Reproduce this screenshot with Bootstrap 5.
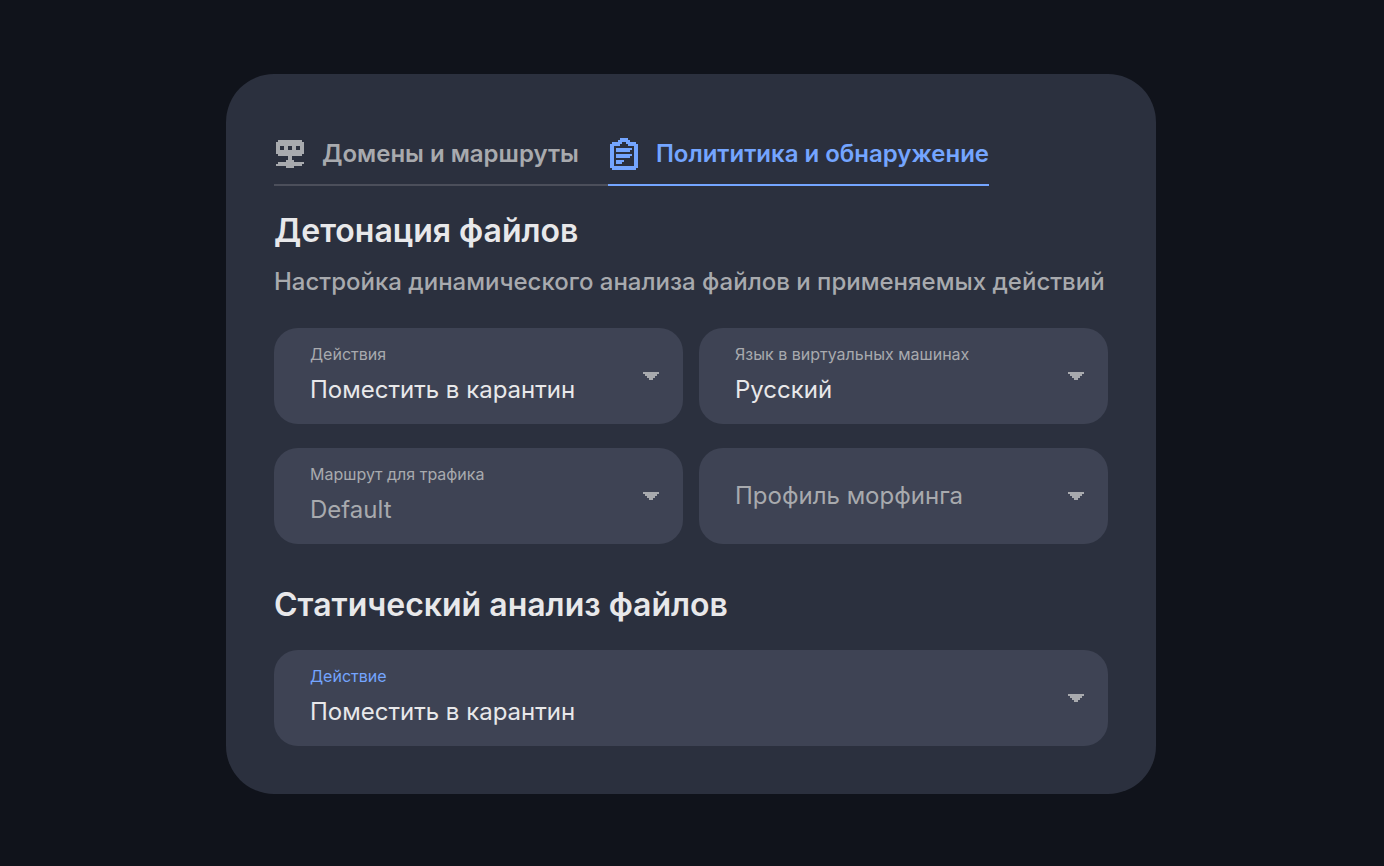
<!DOCTYPE html>
<html lang="ru">
<head>
<meta charset="utf-8">
<meta name="viewport" content="width=device-width, initial-scale=1">
<title>Детонация файлов</title>
<link href="https://cdn.jsdelivr.net/npm/bootstrap@5.3.0/dist/css/bootstrap.min.css" rel="stylesheet">
<style>
  body { background: #10131b; color: #e8e8ea; font-family: Inter, "Liberation Sans", sans-serif; }
  .stage { padding: 26px 14px 24px 12px; }
  .panel { background: #2b303e; border-radius: 48px; max-width: 930px; padding: 48px; }
  .tab-link { color: #a8aaae; font-size: 24px; font-weight: 600; line-height: 32px; padding: 16px 0 14px; border-bottom: 2px solid #4c4f5b; gap: 16px; }
  .tab-link:first-child { padding-right: 29px; }
  .tab-link:hover { color: #c4c6ca; }
  .tab-link.active { color: #74a5ff; border-color: #74a5ff; }
  .tab-icon { width: 32px; height: 32px; fill: currentColor; flex: none; }
  .section-title { font-size: 32px; font-weight: 600; line-height: 42px; margin: 0; }
  .hint { color: #a8aaae; font-size: 24px; font-weight: 500; line-height: 32px; margin: 14px 0 0; }
  .fields { row-gap: 24px; padding-top: 6px; }
  .field-label { position: absolute; top: 16px; left: 36px; font-size: 16px; line-height: 20px; color: #a8aaae; pointer-events: none; }
  .field-label.current { color: #74a5ff; }
  .field-select {
    height: 96px; padding: 42px 56px 14px 36px; border: 0; border-radius: 24px;
    font-size: 24px; line-height: 32px; color: #e8e8ea;
    background: #3e4354 url("data:image/svg+xml,%3Csvg xmlns='http://www.w3.org/2000/svg' viewBox='0 0 8 4' shape-rendering='crispEdges'%3E%3Cpath fill='%23a8aaae' d='M0 0h8v1H7v1H6v1H5v1H3V3H2V2H1V1H0z'/%3E%3C/svg%3E") no-repeat right 24px center / 16px 8px;
  }
  .field-select.muted { color: #a8aaae; }
  .field-select.unlabelled { padding-top: 26px; padding-bottom: 26px; }
</style>
</head>
<body>
<div class="stage container-fluid min-vh-100 d-flex align-items-center justify-content-center">
  <main class="panel w-100">
    <nav class="d-flex" aria-label="Разделы настроек">
      <a class="tab-link d-flex align-items-center text-decoration-none" href="#domains">
        <svg class="tab-icon" viewBox="0 0 16 16" shape-rendering="crispEdges" aria-hidden="true">
          <path fill-rule="evenodd" d="M2 1h12v1h1v6h-1v1H9v2h1v1h5v1h-1v1h-4v1H6v-1H1v-1h1v-1h4v-1h1V9H2V8H1V2h1zM3 4v2h2V4zM7 4v2h2V4zM11 4v2h2V4z"/>
        </svg>
        <span>Домены и маршруты</span>
      </a>
      <a class="tab-link active d-flex align-items-center text-decoration-none" href="#policy" aria-current="page">
        <svg class="tab-icon" viewBox="0 0 16 16" shape-rendering="crispEdges" aria-hidden="true">
          <path fill-rule="evenodd" d="M6 0h4v1h1v1h3v1h1v12h-1v1H2v-1H1V3h1V2h3V1h1zM7 2v1H6v1H3v10h10V4h-3V3H9V2z"/>
          <path d="M4 5h8v1h-1v1H4zM4 8h8v1h-1v1H4zM4 11h4v1H7v1H4z"/>
        </svg>
        <span>Полититика и обнаружение</span>
      </a>
    </nav>

    <section class="mt-4">
      <h2 class="section-title">Детонация файлов</h2>
      <p class="hint">Настройка динамического анализа файлов и применяемых действий</p>
      <div class="row gx-3 fields mt-0">
        <div class="col-sm-6 mt-4">
          <div class="position-relative">
            <label class="field-label" for="action">Действия</label>
            <select class="form-select field-select" id="action"><option>Поместить в карантин</option></select>
          </div>
        </div>
        <div class="col-sm-6 mt-4">
          <div class="position-relative">
            <label class="field-label" for="vmLang">Язык в виртуальных машинах</label>
            <select class="form-select field-select" id="vmLang"><option>Русский</option></select>
          </div>
        </div>
        <div class="col-sm-6 mt-0">
          <div class="position-relative">
            <label class="field-label" for="route">Маршрут для трафика</label>
            <select class="form-select field-select muted" id="route"><option>Default</option></select>
          </div>
        </div>
        <div class="col-sm-6 mt-0">
          <select class="form-select field-select muted unlabelled" aria-label="Профиль морфинга"><option>Профиль морфинга</option></select>
        </div>
      </div>
    </section>

    <section class="mt-4 pt-3">
      <h2 class="section-title">Статический анализ файлов</h2>
      <div class="position-relative mt-4">
        <label class="field-label current" for="staticAction">Действие</label>
        <select class="form-select field-select" id="staticAction"><option>Поместить в карантин</option></select>
      </div>
    </section>
  </main>
</div>
<script src="https://cdn.jsdelivr.net/npm/bootstrap@5.3.0/dist/js/bootstrap.bundle.min.js"></script>
</body>
</html>
